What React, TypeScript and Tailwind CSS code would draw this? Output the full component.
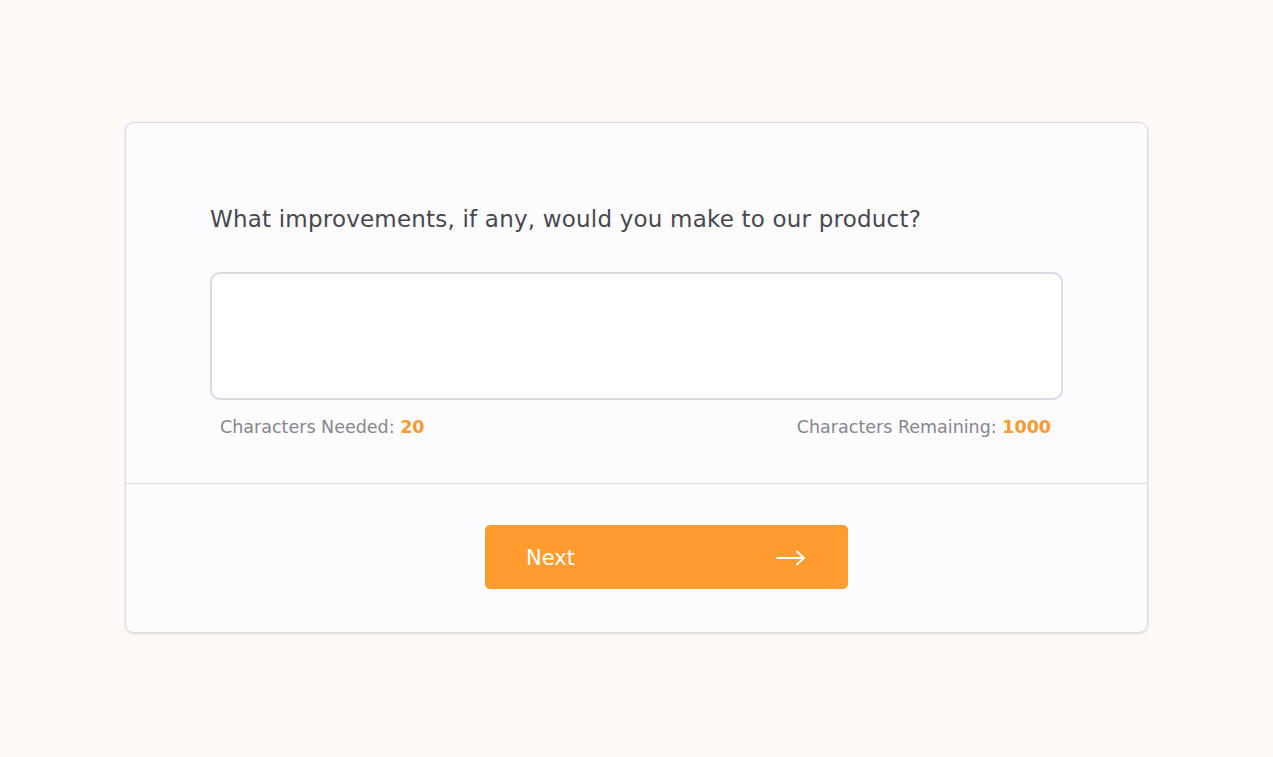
import React from "react";

export default function App() {
  return (
    <div className="min-h-[757px] w-full bg-[#fdf9f6] flex justify-center pt-[122px]" style={{ fontFamily: "'DejaVu Sans', 'Noto Sans', sans-serif" }}>
      <div className="w-[1023px] h-[511px] bg-[#fcfbfe] border border-[#dbd8e4] rounded-[9px] shadow-[0_1px_3px_rgba(0,0,0,0.1)] flex flex-col">
        <div className="h-[361px] border-b border-[#dbd8e4] px-[84px] pt-[80px]">
          <div className="text-[23px] leading-[32px] tracking-[0.2px] text-[#48484e]">What improvements, if any, would you make to our product?</div>
          <textarea className="mt-[37px] block w-[853px] h-[128px] bg-white border-2 border-[#dcd9e5] rounded-[10px] resize-none outline-none" />
          <div className="mt-[15px] flex justify-between pl-[10px] pr-[12px] text-[17.5px] leading-[24px] text-[#86868c]">
            <div>Characters Needed: <span className="font-semibold text-[#f79a32]">20</span></div>
            <div>Characters Remaining: <span className="font-semibold text-[#f79a32]">1000</span></div>
          </div>
        </div>
        <div className="flex-1 flex items-start justify-center pt-[41px]">
          <button className="ml-[60px] w-[363px] h-[64px] bg-[#ff9c30] rounded-[5px] flex items-center justify-between pl-[41px] pr-[42px] text-white text-[21px]">
            <span className="pt-[3px]">Next</span>
            <svg className="mt-[2px]" width="30" height="16" viewBox="0 0 30 16" fill="none" stroke="white" strokeWidth="1.8" strokeLinecap="round" strokeLinejoin="round">
              <path d="M1 8h27M21 1.5 28 8l-7 6.5" />
            </svg>
          </button>
        </div>
      </div>
    </div>
  );
}
